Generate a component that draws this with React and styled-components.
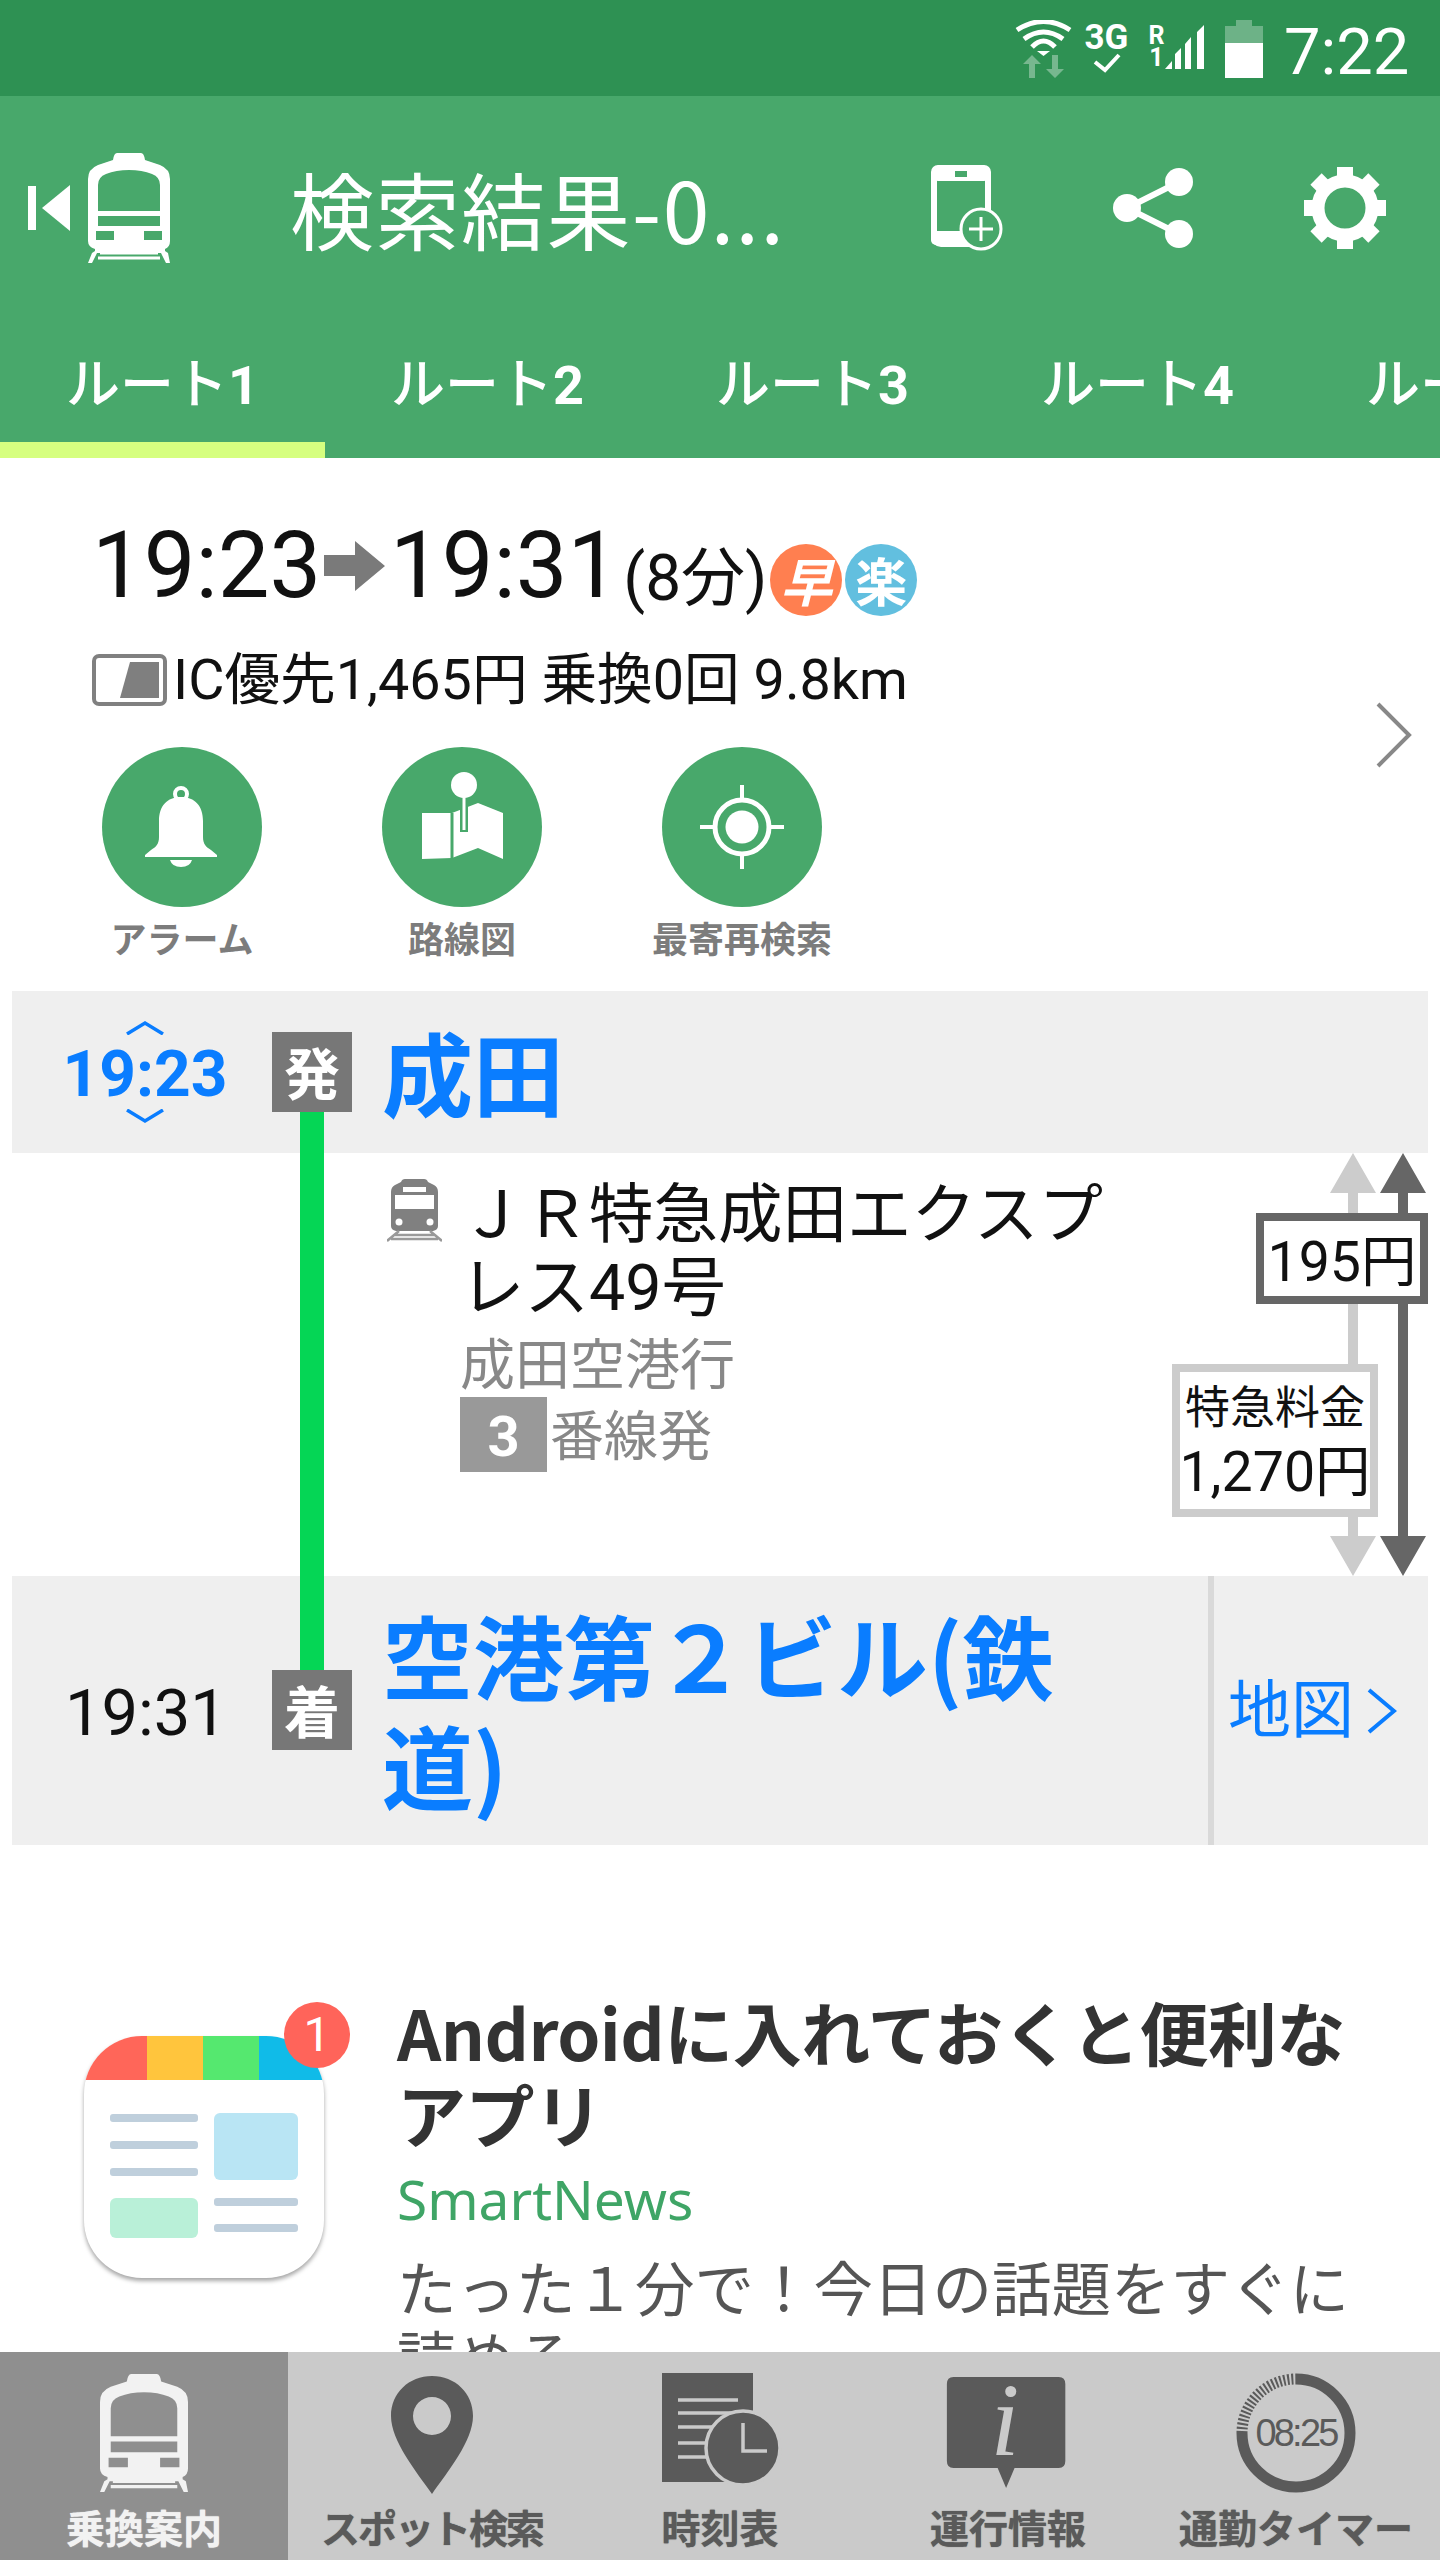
import React from 'react';
import styled, { createGlobalStyle } from 'styled-components';

const FONT = `Roboto, 'Noto Sans CJK JP', sans-serif`;
const JP = `'Noto Sans CJK JP', sans-serif`;
const GREEN = '#48a86b';
const BLUE = '#0a7dff';

const GlobalStyle = createGlobalStyle`
  html, body { margin: 0; padding: 0; background: #fff; }
  body { font-family: ${FONT}; }
`;

const Screen = styled.div`
  width: 1440px;
  height: 2560px;
  display: flex;
  flex-direction: column;
  overflow: hidden;
  background: #fff;
`;

const StatusBar = styled.div`
  height: 96px;
  flex: none;
  background: #2e9153;
  display: flex;
  justify-content: flex-end;
  align-items: flex-start;
  padding: 20px 33px 0 0;
  box-sizing: border-box;
  color: #fff;
`;
const WifiBox = styled.div`margin-right: 15px; line-height: 0;`;
const NetStack = styled.div`
  width: 39px;
  margin: 3px 22px 0 0;
  display: flex;
  flex-direction: column;
  align-items: center;
  font: 700 35px/30px ${FONT};
`;
const RoamStack = styled.div`
  width: 17px;
  margin-top: 5px;
  display: flex;
  flex-direction: column;
  align-items: center;
  font: 700 25px/22px ${FONT};
`;
const BarsBox = styled.div`margin: 5px 20px 0 0; line-height: 0;`;
const ClockText = styled.div`
  margin-left: 21px;
  font: 400 65px/64px ${FONT};
  width: 123px;
  white-space: nowrap;
`;

const TopHeader = styled.header`
  height: 224px;
  flex: none;
  background: ${GREEN};
  display: flex;
  align-items: center;
  color: #fff;
  box-sizing: border-box;
  padding-right: 53px;
`;
const HomeButton = styled.div`
  width: 290px;
  display: flex;
  align-items: center;
  padding-left: 28px;
  gap: 18px;
  box-sizing: border-box;
`;
const ScreenTitle = styled.h1`
  flex: 1;
  margin: 0;
  font: 400 84px/100px ${JP};
  letter-spacing: 1.5px;
  white-space: nowrap;
`;
const HeaderActions = styled.div`
  display: flex;
  align-items: center;
  gap: 110px;
`;

const TabBar = styled.nav`
  height: 138px;
  flex: none;
  background: ${GREEN};
  display: flex;
  overflow: hidden;
`;
const Tab = styled.div`
  width: 325px;
  flex: none;
  height: 138px;
  box-sizing: border-box;
  padding-top: 28px;
  text-align: center;
  font: 500 54px/66px ${JP};
  color: #fff;
  white-space: nowrap;
  border-bottom: 16px solid ${p => (p.$active ? '#d6ff80' : 'transparent')};
`;
const TabNumber = styled.span`
  font: 700 54px/66px ${FONT};
`;

const Main = styled.main`
  flex: 1;
  min-height: 0;
  overflow: hidden;
`;

const Summary = styled.section`
  height: 533px;
  display: flex;
  padding: 58px 28px 0 92px;
  box-sizing: border-box;
`;
const SummaryBody = styled.div`flex: 1;`;
const TimeRow = styled.div`
  display: flex;
  align-items: center;
  height: 100px;
  color: #111;
`;
const BigTime = styled.span`
  font: 400 92px/100px ${FONT};
  white-space: nowrap;
`;
const ArrowBox = styled.span`
  margin: 0 5px 0 3px;
  line-height: 0;
`;
const Duration = styled.span`
  font: 400 64px/70px ${FONT};
  margin: 26px 3px 0 4px;
  white-space: nowrap;
`;
const Badge = styled.span`
  width: 72px;
  height: 72px;
  border-radius: 50%;
  background: ${p => p.$color};
  color: #fff;
  margin: 28px 0 0 ${p => p.$gap}px;
  display: flex;
  align-items: center;
  justify-content: center;
  font: ${p => (p.$slant ? 'italic 700' : '700')} 52px/72px ${JP};
`;
const FareRow = styled.div`
  margin-top: 34px;
  display: flex;
  align-items: center;
  gap: 6px;
  font: 400 55.7px/60px ${FONT};
  color: #111;
  white-space: nowrap;
`;
const QuickActions = styled.div`
  margin: 37px 0 0 10px;
  display: flex;
  gap: 120px;
`;
const QuickAction = styled.div`
  width: 160px;
  display: flex;
  flex-direction: column;
  align-items: center;
  gap: 8px;
`;
const QuickCircle = styled.div`
  width: 160px;
  height: 160px;
  border-radius: 50%;
  background: ${GREEN};
  line-height: 0;
`;
const QuickLabel = styled.div`
  font: 700 36px/44px ${JP};
  color: #7c7c7c;
  white-space: nowrap;
`;
const DetailChevron = styled.div`
  align-self: flex-start;
  margin-top: 186px;
  line-height: 0;
`;

const Route = styled.section`
  margin: 0 12px;
`;
const RouteRow = styled.div`
  display: grid;
  grid-template-columns: 260px 80px 1fr;
  height: ${p => p.$height}px;
  background: ${p => (p.$plain ? '#fff' : '#efefef')};
`;
const TimeCell = styled.div`
  padding-left: 53px;
  display: flex;
  align-items: center;
`;
const TimeStack = styled.div`
  width: 160px;
  display: flex;
  flex-direction: column;
  align-items: center;
  gap: 4px;
  line-height: 0;
`;
const DepartTime = styled.div`
  padding-top: 6px;
  font: 700 64px/60px ${FONT};
  color: ${BLUE};
  white-space: nowrap;
`;
const ArriveTime = styled.div`
  padding-top: 4px;
  font: 400 65px/70px ${FONT};
  color: #111;
`;
const MarkerCell = styled.div`
  display: flex;
  flex-direction: column;
  align-items: center;
`;
const Stop = styled.div`
  width: 80px;
  height: 80px;
  flex: none;
  margin-top: ${p => p.$top || 0}px;
  background: #777;
  color: #fff;
  font: 700 56px/78px ${JP};
  text-align: center;
`;
const Stem = styled.div`
  width: 24px;
  background: #05d655;
  ${p => (p.$height ? `height: ${p.$height}px; flex: none;` : 'flex: 1;')}
`;
const StationName = styled.div`
  padding-left: 30px;
  font: 700 91px/110px ${JP};
  color: ${BLUE};
  align-self: center;
  max-width: ${p => p.$max || 800}px;
  margin-bottom: ${p => p.$lift || 0}px;
`;
const TrainCell = styled.div`
  display: flex;
  padding: 26px 0 0 35px;
  position: relative;
`;
const TrainIconBox = styled.div`
  width: 73px;
  line-height: 0;
`;
const TrainText = styled.div`
  width: 680px;
  flex: none;
`;
const TrainName = styled.div`
  font: 400 64.5px/73px ${FONT};
  color: #111;
`;
const TrainDest = styled.div`
  padding-top: 4px;
  margin-bottom: -4px;
  font: 400 55px/72px ${FONT};
  color: #888;
`;
const PlatformRow = styled.div`
  display: flex;
  align-items: flex-start;
  gap: 3px;
`;
const PlatformNo = styled.span`
  width: 87px;
  height: 75px;
  padding-top: 5px;
  box-sizing: border-box;
  background: #999;
  color: #fff;
  text-align: center;
  font: 700 56px/70px ${FONT};
`;
const PlatformText = styled.span`
  font: 400 54px/82px ${FONT};
  color: #888;
`;
const FareTrack = styled.div`
  position: absolute;
  top: 0;
  right: 0;
  bottom: 0;
  display: flex;
  gap: 4px;
  padding-right: 2px;
  line-height: 0;
`;
const FareBox = styled.div`
  position: absolute;
  box-sizing: border-box;
  background: #fff;
  color: #111;
  right: ${p => p.$right}px;
  top: ${p => p.$top}px;
  width: ${p => p.$width}px;
  height: ${p => p.$height}px;
  padding-top: ${p => p.$pad}px;
  border: 8px solid ${p => p.$border};
  display: flex;
  flex-direction: column;
  align-items: center;
  justify-content: center;
  white-space: nowrap;
`;
const FareName = styled.div`font: 400 45px/62px ${FONT};`;
const FareValue = styled.div`font: 400 55.5px/66px ${FONT};`;
const ArrivalBody = styled.div`
  display: flex;
  justify-content: space-between;
  align-items: center;
`;
const MapLink = styled.div`
  width: 220px;
  height: 100%;
  flex: none;
  box-sizing: border-box;
  border-left: 6px solid #d9d9d9;
  padding-left: 14px;
  display: flex;
  align-items: center;
  gap: 13px;
  font: 400 63px/70px ${FONT};
  color: ${BLUE};
  white-space: nowrap;
`;

const Ad = styled.article`
  display: flex;
  padding: 145px 40px 0 84px;
`;
const AppIconFrame = styled.div`
  position: relative;
  width: 240px;
  height: 242px;
  flex: none;
  margin: 46px 73px 0 0;
`;
const AppIcon = styled.div`
  width: 240px;
  height: 242px;
  border-radius: 58px;
  overflow: hidden;
  background: #fff;
  box-shadow: 0 3px 4px rgba(0, 0, 0, 0.35);
  display: flex;
  flex-direction: column;
`;
const AppBand = styled.div`
  height: 44px;
  flex: none;
  display: grid;
  grid-template-columns: 63px 56px 56px 65px;
`;
const BandPart = styled.div`background: ${p => p.$color};`;
const AppPage = styled.div`
  display: grid;
  grid-template-columns: 88px 84px;
  column-gap: 16px;
  padding: 33px 0 0 26px;
`;
const AppLines = styled.div`
  display: flex;
  flex-direction: column;
  gap: ${p => p.$gap}px;
  padding-top: ${p => p.$top || 0}px;
`;
const AppLine = styled.div`
  height: 8px;
  border-radius: 3px;
  background: #bfcfdc;
`;
const AppBlock = styled.div`
  height: ${p => p.$height}px;
  border-radius: 6px;
  background: ${p => p.$color};
  margin-top: ${p => p.$top || 0}px;
`;
const CountBadge = styled.div`
  position: absolute;
  top: -34px;
  right: -26px;
  width: 66px;
  height: 66px;
  border-radius: 50%;
  background: #ff645a;
  color: #fff;
  text-align: center;
  font: 400 48px/66px ${FONT};
`;
const AdText = styled.div`flex: 1;`;
const AdTitle = styled.div`
  font: 700 69px/82px ${JP};
  letter-spacing: -0.5px;
  color: #333;
  white-space: pre-line;
`;
const AdSource = styled.div`
  font: 400 55px/72px 'Noto Sans', ${JP};
  color: #3fa566;
  margin-top: 9px;
`;
const AdDesc = styled.div`
  font: 400 59.5px/70px ${JP};
  color: #555;
  margin-top: 15px;
`;

const BottomNav = styled.nav`
  height: 208px;
  flex: none;
  background: #cacaca;
  display: grid;
  grid-template-columns: repeat(5, 288px);
`;
const NavItem = styled.div`
  display: flex;
  flex-direction: column;
  align-items: center;
  padding-top: 21px;
  box-sizing: border-box;
  background: ${p => (p.$active ? '#8f8f8f' : 'transparent')};
  color: ${p => (p.$active ? '#f2f2f2' : '#5a5a5a')};
`;
const NavIconSlot = styled.div`
  height: 128px;
  line-height: 0;
`;
const NavLabel = styled.div`
  font: 700 39px/50px ${JP};
  letter-spacing: ${p => (p.$tight ? '-2px' : '0')};
  white-space: nowrap;
  text-shadow: 0 0 1px currentColor;
`;

const TrainGlyph = ({ width, height, color }) => (
  <svg width={width} height={height} viewBox="0 0 82 110">
    <path
      fill={color}
      fillRule="evenodd"
      d="M29 0h24q3 0 4 7l15 5q10 4 10 14v62q0 6-5 8v2l3 2 2 10-4 0-5-10H9l-5 10-4 0 4-10 3-2v-2q-7-2-7-8V26q0-10 10-14l15-5q1-7 4-7zM10 58h62V32q0-8-8-11-10-4-23-4t-23 4q-8 3-8 11zM10 63v10h62V63zM8 78v9h18v-9zM56 78v9h18v-9z"
    />
    <path stroke={color} strokeWidth="3" d="M12 100h58M10 105h62" />
  </svg>
);

const BackIcon = () => (
  <svg width="42" height="46" viewBox="0 0 42 46">
    <rect x="0" y="1" width="8" height="44" fill="#fff" />
    <path d="M14 23 42 0v46z" fill="#fff" />
  </svg>
);

const PhonePlusIcon = () => (
  <svg width="72" height="86" viewBox="0 0 72 86">
    <rect x="3" y="3" width="54" height="76" rx="7" fill="none" stroke="#fff" strokeWidth="6" />
    <rect x="0" y="0" width="60" height="16" rx="7" fill="#fff" />
    <rect x="0" y="66" width="40" height="14" rx="5" fill="#fff" />
    <rect x="24" y="6" width="12" height="6" fill={GREEN} />
    <circle cx="50" cy="64" r="20" fill={GREEN} stroke="#fff" strokeWidth="3" />
    <path d="M50 52v24M38 64h24" stroke="#fff" strokeWidth="3" />
  </svg>
);

const ShareIcon = () => (
  <svg width="80" height="80" viewBox="0 0 80 80" fill="#fff">
    <path d="M66 14 14 40l52 26" fill="none" stroke="#fff" strokeWidth="6" />
    <circle cx="66" cy="14" r="14" />
    <circle cx="14" cy="40" r="14" />
    <circle cx="66" cy="66" r="14" />
  </svg>
);

const GearIcon = () => (
  <svg width="84" height="84" viewBox="0 0 84 84">
    <circle cx="42" cy="42" r="27" fill="none" stroke="#fff" strokeWidth="13" />
    {[0, 45, 90, 135, 180, 225, 270, 315].map(a => (
      <rect key={a} x="34" y="1" width="16" height="14" fill="#fff" transform={`rotate(${a} 42 42)`} />
    ))}
  </svg>
);

const WifiIcon = () => (
  <svg width="57" height="60" viewBox="0 0 57 60">
    <g fill="none" stroke="#fff" strokeWidth="5">
      <path d="M2 10Q28.500-7 55 10" />
      <path d="M9 19Q28.500 5 48 19" />
      <path d="M17 27Q28.500 15 40 27" />
    </g>
    <path d="M22 31h13l-6.500 5z" fill="#fff" />
    <path d="M17 35l9 9h-6v14h-6V44H8zM40 58l-9-9h6V35h6v14h6z" fill="#fff" opacity=".35" />
  </svg>
);

const CheckMark = () => (
  <svg width="28" height="20" viewBox="0 0 28 20">
    <path d="M2 9l10 8L26 2" fill="none" stroke="#fff" strokeWidth="4" />
  </svg>
);

const SignalBars = () => (
  <svg width="40" height="44" viewBox="0 0 40 44" fill="#fff">
    <path d="M0 44 7 36v8zM10 44V29l6-6v21zM20 44V19l6-7v32zM32 44V7l7-7v44z" />
  </svg>
);

const BatteryIcon = () => (
  <svg width="38" height="58" viewBox="0 0 38 58">
    <path d="M11 0h16v6h11v17H0V6h11z" fill="#fff" opacity=".3" />
    <rect x="0" y="23" width="38" height="35" fill="#fff" />
  </svg>
);

const RouteArrow = () => (
  <svg width="61" height="50" viewBox="0 0 61 50">
    <path d="M0 14h31V0l30 25-30 25V35H0z" fill="#7a7a7a" />
  </svg>
);

const IcCardIcon = () => (
  <svg width="75" height="52" viewBox="0 0 75 52">
    <rect x="2" y="2" width="71" height="48" rx="5" fill="#fff" stroke="#808080" strokeWidth="4" />
    <path d="M28 44 38 8h29v36z" fill="#7f7f7f" />
  </svg>
);

const BellIcon = () => (
  <svg width="160" height="160" viewBox="0 0 160 160" fill="#fff">
    <circle cx="79" cy="47" r="6" fill="none" stroke="#fff" strokeWidth="4" />
    <path d="M79 50c-14 0-22 9-22 24v16c0 7-3 10-8 13l-6 5v2h72v-2l-6-5c-5-3-8-6-8-13V74c0-15-8-24-22-24z" />
    <path d="M68 113h22q-2 7-11 7t-11-7z" />
  </svg>
);

const MapIcon = () => (
  <svg width="160" height="160" viewBox="0 0 160 160" fill="#fff">
    <path d="M40 66h30l26-10 25 10v46l-25-11-26 10-30 1z" />
    <path d="M70 66v46" stroke={GREEN} strokeWidth="3" fill="none" />
    <path d="M82 52v33" stroke={GREEN} strokeWidth="8" fill="none" />
    <path d="M82 45v38" stroke="#fff" strokeWidth="3" />
    <circle cx="82" cy="38" r="13" />
  </svg>
);

const TargetIcon = () => (
  <svg width="160" height="160" viewBox="0 0 160 160">
    <circle cx="80" cy="80" r="27" fill="none" stroke="#fff" strokeWidth="5" />
    <circle cx="80" cy="80" r="16.500" fill="#fff" />
    <path d="M80 38v13M80 109v13M38 80h13M109 80h13" stroke="#fff" strokeWidth="4" />
  </svg>
);

const Chevron = ({ width, height, color, weight }) => (
  <svg width={width} height={height} viewBox={`0 0 ${width} ${height}`}>
    <path d={`M2 2 ${width - 3} ${height / 2} 2 ${height - 2}`} fill="none" stroke={color} strokeWidth={weight} />
  </svg>
);

const MiniChevron = ({ up }) => (
  <svg width="38" height="15" viewBox="0 0 38 15">
    <path d={up ? 'M1 14 19 3l18 11' : 'M1 1l18 11L37 1'} fill="none" stroke={BLUE} strokeWidth="3.500" />
  </svg>
);

const SmallTrainIcon = () => (
  <svg width="55" height="63" viewBox="0 0 55 63">
    <path
      fill="#808080"
      fillRule="evenodd"
      d="M18 0h19q3 0 4 3l6 3q4 2 4 7v34q0 4-5 5H9q-5-1-5-5V13q0-5 4-7l6-3q1-3 4-3zM16 8v5h23V8zM8 16v14h39V16z"
    />
    <circle cx="12" cy="43" r="3.500" fill="#fff" />
    <circle cx="43" cy="43" r="3.500" fill="#fff" />
    <path d="M12 52 0 62M43 52l12 10M4 60h47M8 56h39" stroke="#999" strokeWidth="2.500" />
  </svg>
);

const FareArrow = ({ color }) => (
  <svg width="46" height="423" viewBox="0 0 46 423">
    <path d="M23 0 46 40H28v343h18l-23 40-23-40h18V40H0z" fill={color} />
  </svg>
);

const PinIcon = () => (
  <svg width="130" height="125" viewBox="0 0 130 125">
    <path
      fill="#5a5a5a"
      fillRule="evenodd"
      d="M65 3c23 0 41 17 41 40 0 25-25 55-41 78C49 98 24 68 24 43 24 20 42 3 65 3zM65 24a19 19 0 1 0 0 38 19 19 0 0 0 0-38z"
    />
  </svg>
);

const TimetableIcon = () => (
  <svg width="130" height="125" viewBox="0 0 130 125">
    <path d="M7 0h91v109H7z" fill="#5a5a5a" />
    <path d="M23 27h60M23 40h60M23 54h60M23 70h60M23 84h60" stroke="#cacaca" strokeWidth="3.500" />
    <circle cx="88" cy="75" r="37" fill="#5a5a5a" stroke="#cacaca" strokeWidth="3.500" />
    <path d="M88 50v28h24" fill="none" stroke="#cacaca" strokeWidth="3.500" />
  </svg>
);

const InfoIcon = () => (
  <svg width="130" height="125" viewBox="0 0 130 125">
    <path
      d="M9 4h112q7 0 7 7v77q0 7-7 7H74l-9 20-9-20H9q-7 0-7-7V11q0-7 7-7z"
      fill="#5a5a5a"
      transform="translate(2 0) scale(.94 1)"
    />
    <text x="62" y="82" textAnchor="middle" fontFamily="'Liberation Serif', serif" fontStyle="italic" fontSize="104" fill="#cacaca">
      i
    </text>
  </svg>
);

const TimerIcon = () => (
  <svg width="130" height="125" viewBox="0 0 130 125">
    <path d="M65 6a54 54 0 1 1-54 54" fill="none" stroke="#5a5a5a" strokeWidth="11" />
    <path d="M11 60A54 54 0 0 1 65 6" fill="none" stroke="#5a5a5a" strokeWidth="11" strokeDasharray="2 2" />
    <text x="65" y="73" textAnchor="middle" fontFamily="'Liberation Sans', sans-serif" fontSize="38" letterSpacing="-2.800" fill="#5a5a5a">
      08:25
    </text>
  </svg>
);

const tabs = [1, 2, 3, 4, 5];

const App = () => (
  <Screen>
    <GlobalStyle />
    <StatusBar>
      <WifiBox><WifiIcon /></WifiBox>
      <NetStack>3G<CheckMark /></NetStack>
      <RoamStack>R<span>1</span></RoamStack>
      <BarsBox><SignalBars /></BarsBox>
      <BatteryIcon />
      <ClockText>7:22</ClockText>
    </StatusBar>

    <TopHeader>
      <HomeButton>
        <BackIcon />
        <TrainGlyph width={82} height={110} color="#fff" />
      </HomeButton>
      <ScreenTitle>検索結果-0...</ScreenTitle>
      <HeaderActions>
        <PhonePlusIcon />
        <ShareIcon />
        <GearIcon />
      </HeaderActions>
    </TopHeader>

    <TabBar>
      {tabs.map(n => (
        <Tab key={n} $active={n === 1}>ルート<TabNumber>{n}</TabNumber></Tab>
      ))}
    </TabBar>

    <Main>
      <Summary>
        <SummaryBody>
          <TimeRow>
            <BigTime>19:23</BigTime>
            <ArrowBox><RouteArrow /></ArrowBox>
            <BigTime>19:31</BigTime>
            <Duration>(8分)</Duration>
            <Badge $color="#ff7f50" $gap={0} $slant>早</Badge>
            <Badge $color="#62bfdf" $gap={3}>楽</Badge>
          </TimeRow>
          <FareRow>
            <IcCardIcon />
            IC優先1,465円 乗換0回 9.8km
          </FareRow>
          <QuickActions>
            <QuickAction>
              <QuickCircle><BellIcon /></QuickCircle>
              <QuickLabel>アラーム</QuickLabel>
            </QuickAction>
            <QuickAction>
              <QuickCircle><MapIcon /></QuickCircle>
              <QuickLabel>路線図</QuickLabel>
            </QuickAction>
            <QuickAction>
              <QuickCircle><TargetIcon /></QuickCircle>
              <QuickLabel>最寄再検索</QuickLabel>
            </QuickAction>
          </QuickActions>
        </SummaryBody>
        <DetailChevron><Chevron width={36} height={66} color="#888" weight={4} /></DetailChevron>
      </Summary>

      <Route>
        <RouteRow $height={162}>
          <TimeCell>
            <TimeStack>
              <MiniChevron up />
              <DepartTime>19:23</DepartTime>
              <MiniChevron />
            </TimeStack>
          </TimeCell>
          <MarkerCell>
            <Stop $top={41}>発</Stop>
            <Stem />
          </MarkerCell>
          <StationName $lift={4}>成田</StationName>
        </RouteRow>

        <RouteRow $height={423} $plain>
          <div />
          <MarkerCell><Stem /></MarkerCell>
          <TrainCell>
            <TrainIconBox><SmallTrainIcon /></TrainIconBox>
            <TrainText>
              <TrainName>ＪＲ特急成田エクスプレス49号</TrainName>
              <TrainDest>成田空港行</TrainDest>
              <PlatformRow>
                <PlatformNo>3</PlatformNo>
                <PlatformText>番線発</PlatformText>
              </PlatformRow>
            </TrainText>
            <FareTrack>
              <FareArrow color="#ccc" />
              <FareArrow color="#666" />
              <FareBox $right={0} $top={60} $width={172} $height={91} $pad={8} $border="#666">
                <FareValue>195円</FareValue>
              </FareBox>
              <FareBox $right={50} $top={211} $width={206} $height={153} $pad={3} $border="#ccc">
                <FareName>特急料金</FareName>
                <FareValue>1,270円</FareValue>
              </FareBox>
            </FareTrack>
          </TrainCell>
        </RouteRow>

        <RouteRow $height={269}>
          <TimeCell><ArriveTime>19:31</ArriveTime></TimeCell>
          <MarkerCell>
            <Stem $height={94} />
            <Stop>着</Stop>
          </MarkerCell>
          <ArrivalBody>
            <StationName $max={700} $lift={5}>空港第２ビル(鉄道)</StationName>
            <MapLink>
              地図
              <Chevron width={30} height={46} color={BLUE} weight={4} />
            </MapLink>
          </ArrivalBody>
        </RouteRow>
      </Route>

      <Ad>
        <AppIconFrame>
          <AppIcon>
            <AppBand>
              <BandPart $color="#ff6659" />
              <BandPart $color="#ffc53d" />
              <BandPart $color="#55e86f" />
              <BandPart $color="#10bbe8" />
            </AppBand>
            <AppPage>
              <AppLines $gap={19} $top={1}>
                <AppLine />
                <AppLine />
                <AppLine />
                <AppBlock $height={40} $color="#b9f0d8" $top={3} />
              </AppLines>
              <AppLines $gap={18}>
                <AppBlock $height={67} $color="#b9e5f4" />
                <AppLine />
                <AppLine />
              </AppLines>
            </AppPage>
          </AppIcon>
          <CountBadge>1</CountBadge>
        </AppIconFrame>
        <AdText>
          <AdTitle>{'Androidに入れておくと便利な\nアプリ'}</AdTitle>
          <AdSource>SmartNews</AdSource>
          <AdDesc>たった１分で！今日の話題をすぐに読める</AdDesc>
        </AdText>
      </Ad>
    </Main>

    <BottomNav>
      <NavItem $active>
        <NavIconSlot><TrainGlyph width={88} height={120} color="#f2f2f2" /></NavIconSlot>
        <NavLabel>乗換案内</NavLabel>
      </NavItem>
      <NavItem>
        <NavIconSlot><PinIcon /></NavIconSlot>
        <NavLabel $tight>スポット検索</NavLabel>
      </NavItem>
      <NavItem>
        <NavIconSlot><TimetableIcon /></NavIconSlot>
        <NavLabel>時刻表</NavLabel>
      </NavItem>
      <NavItem>
        <NavIconSlot><InfoIcon /></NavIconSlot>
        <NavLabel>運行情報</NavLabel>
      </NavItem>
      <NavItem>
        <NavIconSlot><TimerIcon /></NavIconSlot>
        <NavLabel>通勤タイマー</NavLabel>
      </NavItem>
    </BottomNav>
  </Screen>
);

export default App;
